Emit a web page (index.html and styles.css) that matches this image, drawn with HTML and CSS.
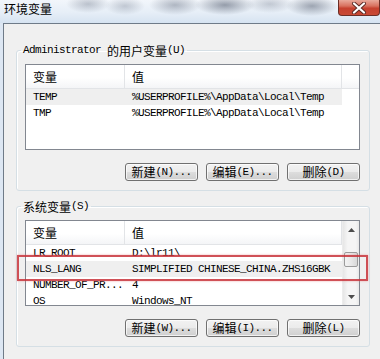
FILE: index.html
```html
<!DOCTYPE html>
<html lang="zh-CN">
<head>
<meta charset="utf-8">
<title>环境变量</title>
<link rel="stylesheet" href="styles.css">
</head>
<body>
<div class="window">
  <div class="titlebar">
    <span class="title">环境变量</span>
    <div class="close">
      <svg width="16" height="12" viewBox="0 0 16 12">
        <path d="M3 1.5 L13 10.5 M13 1.5 L3 10.5" stroke="#5a2a24" stroke-width="4" stroke-linecap="round" fill="none"/>
        <path d="M3 1.5 L13 10.5 M13 1.5 L3 10.5" stroke="#ffffff" stroke-width="2.2" stroke-linecap="round" fill="none"/>
      </svg>
    </div>
  </div>
  <div class="frame">
    <div class="body">
      <fieldset class="group first">
        <legend><span class="en">Administrator </span><span class="zh">的用户变量</span><span class="en">(U)</span></legend>
        <div class="listbox">
          <div class="list">
            <div class="head">
              <div class="c1">变量</div>
              <div class="c2">值</div>
              <div class="cfill"></div>
            </div>
            <div class="row sel"><div class="c1 en">TEMP</div><div class="c2 en">%USERPROFILE%\AppData\Local\Temp</div></div>
            <div class="row"><div class="c1 en">TMP</div><div class="c2 en">%USERPROFILE%\AppData\Local\Temp</div></div>
          </div>
        </div>
        <div class="buttons">
          <button class="btn"><span class="zh">新建</span><span class="en">(N)...</span></button>
          <button class="btn"><span class="zh">编辑</span><span class="en">(E)...</span></button>
          <button class="btn"><span class="zh">删除</span><span class="en">(D)</span></button>
        </div>
      </fieldset>
      <fieldset class="group second">
        <legend><span class="zh">系统变量</span><span class="en">(S)</span></legend>
        <div class="listbox">
          <div class="list">
            <div class="head">
              <div class="c1">变量</div>
              <div class="c2">值</div>
            </div>
            <div class="row"><div class="c1 en">LR_ROOT</div><div class="c2 en">D:\lr11\</div></div>
            <div class="row sel"><div class="c1 en">NLS_LANG</div><div class="c2 en">SIMPLIFIED CHINESE_CHINA.ZHS16GBK</div></div>
            <div class="row"><div class="c1 en">NUMBER_OF_PR...</div><div class="c2 en">4</div></div>
            <div class="row"><div class="c1 en">OS</div><div class="c2 en">Windows_NT</div></div>
          </div>
          <div class="scrollbar">
            <div class="sbtn"><svg width="7" height="4" viewBox="0 0 7 4"><path d="M0 4 L3.5 0 L7 4 Z" fill="#4d4d4d"/></svg></div>
            <div class="track"><div class="thumb"></div></div>
            <div class="sbtn"><svg width="7" height="4" viewBox="0 0 7 4"><path d="M0 0 L3.5 4 L7 0 Z" fill="#4d4d4d"/></svg></div>
          </div>
        </div>
        <div class="buttons">
          <button class="btn"><span class="zh">新建</span><span class="en">(W)...</span></button>
          <button class="btn"><span class="zh">编辑</span><span class="en">(I)...</span></button>
          <button class="btn"><span class="zh">删除</span><span class="en">(L)</span></button>
        </div>
      </fieldset>
    </div>
  </div>
  <div class="redbox"></div>
</div>
</body>
</html>
```
FILE: styles.css
```css
html, body {
  margin: 0;
  padding: 0;
}
body {
  width: 380px;
  height: 359px;
  overflow: hidden;
  font-family: "Noto Sans CJK SC", sans-serif;
  font-size: 12px;
  color: #000;
  background: #f0f0f0;
}
.window {
  position: relative;
  width: 380px;
  height: 359px;
  display: flex;
  flex-direction: column;
}
.titlebar {
  height: 23px;
  flex: none;
  display: flex;
  justify-content: space-between;
  align-items: flex-start;
  background:
    radial-gradient(ellipse 22px 9px at 88px 4px, rgba(90,100,120,0.35), rgba(90,100,120,0) 100%),
    radial-gradient(ellipse 20px 9px at 125px 6px, rgba(90,100,120,0.3), rgba(90,100,120,0) 100%),
    radial-gradient(ellipse 26px 10px at 175px 5px, rgba(80,90,110,0.4), rgba(80,90,110,0) 100%),
    radial-gradient(ellipse 30px 10px at 225px 5px, rgba(60,70,90,0.5), rgba(60,70,90,0) 100%),
    radial-gradient(ellipse 24px 9px at 270px 4px, rgba(90,100,120,0.3), rgba(90,100,120,0) 100%),
    radial-gradient(ellipse 26px 10px at 312px 6px, rgba(60,70,90,0.45), rgba(60,70,90,0) 100%),
    linear-gradient(to bottom, #f2f6fb 0%, #e6eef7 55%, #d6e3f1 100%);
}
.title {
  padding-left: 4px;
  line-height: 18px;
  font-size: 12px;
}
.close {
  width: 42px;
  height: 16px;
  box-sizing: border-box;
  border: 1px solid #6b2e26;
  border-top: none;
  border-radius: 0 0 4px 4px;
  background: linear-gradient(to bottom, #e9a99b 0%, #d8715f 40%, #c6412f 55%, #c84a35 100%);
  display: flex;
  align-items: center;
  justify-content: center;
}
.frame {
  flex: 1;
  display: flex;
  padding-left: 3px;
  background: #dde7f3;
}
.body {
  flex: 1;
  border-left: 1px solid #6f7b88;
  border-top: 1px solid #6f7b88;
  background: #f0f0f0;
  display: flex;
  flex-direction: column;
}
.en {
  font-family: "Liberation Mono", monospace;
  font-size: 11px;
  letter-spacing: -0.6px;
  white-space: pre;
}
.zh {
  font-family: "Noto Sans CJK SC", sans-serif;
  font-size: 12px;
}
.group {
  margin: 0 10px 0 12px;
  min-width: 0;
  padding: 7px 9px 9px 8px;
  border: 1px solid #d5dfe5;
  border-radius: 3px;
  box-shadow: inset 1px 1px 0 #ffffff;
}
.group.first {
  margin-top: 19px;
}
.group.second {
  margin-top: 8px;
}
.group legend {
  padding: 0 2px;
  margin-left: -4px;
  height: 14px;
  box-sizing: border-box;
  display: flex;
  align-items: center;
  font-size: 12px;
}
.listbox {
  height: 86px;
  flex: none;
  box-sizing: border-box;
  border: 1px solid #828790;
  background: #ffffff;
  display: flex;
  overflow: hidden;
}
.list {
  flex: 1;
  min-width: 0;
}
.head {
  height: 24px;
  box-sizing: border-box;
  display: flex;
  background: linear-gradient(to bottom, #ffffff 0%, #ffffff 55%, #f4f5f7 100%);
  border-bottom: 1px solid #e2e4e7;
}
.head > div {
  line-height: 23px;
  box-sizing: border-box;
  padding-left: 7px;
  font-size: 12px;
}
.head .c1, .head .c2 {
  border-right: 1px solid #e2e4e7;
}
.head .cfill {
  flex: 1;
}
.c1 {
  width: 99px;
  flex: none;
}
.c2 {
  width: 217px;
  flex: none;
}
.row {
  display: flex;
  height: 16px;
  width: 316px;
}
.row > div {
  box-sizing: border-box;
  padding-left: 7px;
  line-height: 16px;
  overflow: hidden;
}
.row.sel {
  background: #efefef;
}
.scrollbar {
  width: 17px;
  flex: none;
  display: flex;
  flex-direction: column;
  background: linear-gradient(to right, #e6e6e6 0%, #f5f5f5 30%, #f5f5f5 80%, #e8e8e8 100%);
  border-left: 1px solid #ececec;
  box-sizing: border-box;
}
.sbtn {
  height: 17px;
  flex: none;
  display: flex;
  align-items: center;
  justify-content: center;
}
.track {
  flex: 1;
  padding-top: 14px;
  display: flex;
  flex-direction: column;
  align-items: center;
}
.thumb {
  width: 14px;
  height: 15px;
  box-sizing: border-box;
  border: 1px solid #9b9b9b;
  border-radius: 2px;
  background: linear-gradient(to right, #f3f3f3 0%, #e8e8e8 50%, #d8d8d8 100%);
}
.buttons {
  margin-top: 13px;
  height: 18px;
  display: flex;
  justify-content: flex-end;
  gap: 8px;
}
.btn {
  width: 73px;
  height: 18px;
  box-sizing: border-box;
  padding: 0;
  margin: 0;
  border: 1px solid #707070;
  border-radius: 3px;
  background: linear-gradient(to bottom, #f2f2f2 0%, #ebebeb 50%, #dddddd 51%, #cfcfcf 100%);
  box-shadow: inset 0 0 0 1px rgba(255,255,255,0.7);
  font-family: "Noto Sans CJK SC", sans-serif;
  font-size: 12px;
  line-height: 16px;
  color: #000;
  display: flex;
  align-items: center;
  justify-content: center;
}
.redbox {
  position: absolute;
  left: 17px;
  top: 255px;
  width: 351px;
  height: 26px;
  box-sizing: border-box;
  border: 2px solid rgba(200, 50, 58, 0.85);
  box-shadow: 0 0 2px rgba(230, 120, 120, 0.6);
}
```
